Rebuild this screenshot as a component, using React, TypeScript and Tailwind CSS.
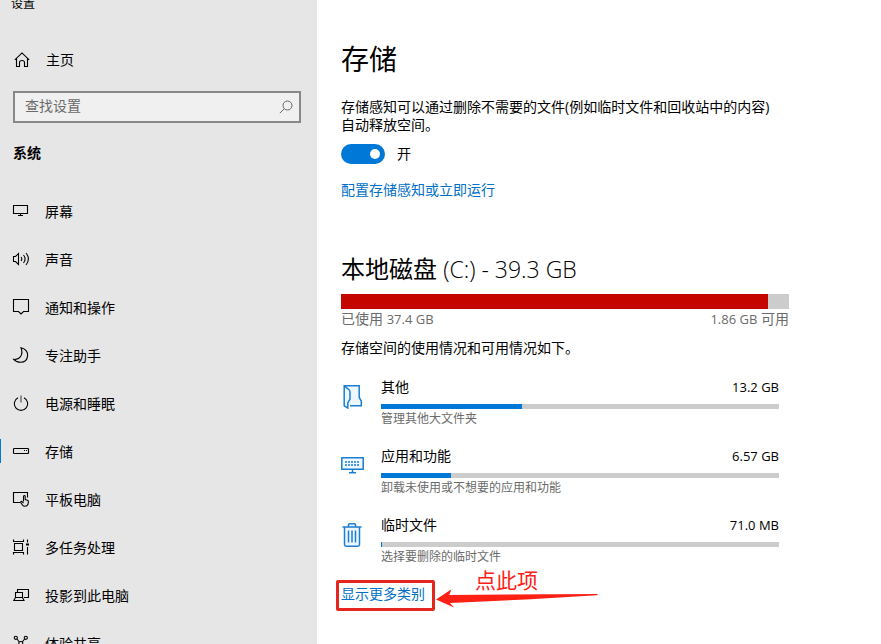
import React from 'react'

const navItems = [
    { label: '屏幕', icon: <DisplayIcon /> },
    { label: '声音', icon: <SoundIcon /> },
    { label: '通知和操作', icon: <NotificationIcon /> },
    { label: '专注助手', icon: <MoonIcon /> },
    { label: '电源和睡眠', icon: <PowerIcon /> },
    { label: '存储', icon: <StorageIcon />, active: true },
    { label: '平板电脑', icon: <TabletIcon /> },
    { label: '多任务处理', icon: <MultitaskIcon /> },
    { label: '投影到此电脑', icon: <ProjectIcon /> },
    { label: '体验共享', icon: <ShareIcon /> },
]

const categories = [
    { name: '其他', size: '13.2 GB', hint: '管理其他大文件夹', percent: 35.4, icon: <FolderIcon /> },
    { name: '应用和功能', size: '6.57 GB', hint: '卸载未使用或不想要的应用和功能', percent: 17.6, icon: <AppsIcon /> },
    { name: '临时文件', size: '71.0 MB', hint: '选择要删除的临时文件', percent: 0.3, icon: <TrashIcon /> },
]

function App() {
    return (
        <div className="flex h-screen overflow-hidden bg-white font-['Open_Sans','Noto_Sans_CJK_SC',sans-serif] text-sm text-black">
            <Sidebar />
            <main className="min-w-0 flex-1 px-6 pt-[35px]">
                <div className="max-w-[448px]">
                    <h1 className="text-[28px] leading-12">存储</h1>
                    <p className="mt-[15px] max-w-[440px] leading-[18px]">
                        存储感知可以通过删除不需要的文件(例如临时文件和回收站中的内容)自动释放空间。
                    </p>
                    <label className="mt-[10px] flex h-5 items-center gap-3">
                        <input
                            type="checkbox"
                            role="switch"
                            defaultChecked
                            className="relative h-5 w-11 appearance-none rounded-full bg-[#0078d7] before:absolute before:top-[5px] before:right-[5px] before:size-[10px] before:rounded-full before:bg-white"
                        />
                        <span>开</span>
                    </label>
                    <a href="#configure" className="mt-4 block leading-5 text-[#0070c8]">配置存储感知或立即运行</a>

                    <h2 className="mt-[53px] text-2xl leading-8">
                        本地磁盘 <span className="text-[23px] font-light">(C:) - 39.3 GB</span>
                    </h2>
                    <div className="mt-[9px] h-[15px] bg-[#cccccc]">
                        <div className="h-full bg-[#c50500]" style={{ width: '95.3%' }} />
                    </div>
                    <div className="flex justify-between leading-5 text-[#6b6b6b]">
                        <span>已使用 <span className="text-[13px]">37.4 GB</span></span>
                        <span><span className="text-[13px]">1.86 GB</span> 可用</span>
                    </div>
                    <p className="mt-[9px] leading-5">存储空间的使用情况和可用情况如下。</p>

                    <ul className="mt-[19px] space-y-[18px] pr-[10px]">
                        {categories.map((item) => (
                            <li key={item.name} className="flex">
                                <div className="w-10 shrink-0 pt-2">{item.icon}</div>
                                <div className="flex-1">
                                    <div className="flex justify-between leading-5">
                                        <span>{item.name}</span>
                                        <span className="text-[13px]">{item.size}</span>
                                    </div>
                                    <div className="mt-[7px] h-[5px] bg-[#cccccc]">
                                        <div className="h-full bg-[#0078d7]" style={{ width: `${item.percent}%` }} />
                                    </div>
                                    <div className="text-xs leading-[19px] text-[#6b6b6b]">{item.hint}</div>
                                </div>
                            </li>
                        ))}
                    </ul>

                    <div className="relative mt-[18px]">
                        <a href="#more" className="leading-5 text-[#0070c8]">显示更多类别</a>
                        <Annotation />
                    </div>
                </div>
            </main>
        </div>
    )
}

function Sidebar() {
    return (
        <aside className="w-[317px] shrink-0 bg-[#e6e6e6]">
            <div className="-mt-1 pl-[11px] text-xs leading-4">设置</div>
            <a href="#home" className="mt-6 flex h-12 items-center gap-4 pl-[14px]">
                <HomeIcon />
                <span>主页</span>
            </a>
            <div className="mt-[7px] mr-4 ml-[13px] flex h-8 items-center border-2 border-[#888888] bg-[#f0f0f0] pr-[6px] pl-[10px]">
                <input
                    type="text"
                    aria-label="查找设置"
                    placeholder="查找设置"
                    className="min-w-0 flex-1 bg-transparent pb-0.5 outline-none placeholder:text-[#6a6a6a]"
                />
                <svg width="14" height="14" viewBox="0 0 14 14" fill="none" stroke="#666666">
                    <circle cx="8.5" cy="5.5" r="4.5" />
                    <path d="M5.3 8.7L.8 13.2" />
                </svg>
            </div>
            <h2 className="mt-5 pl-[13px] leading-5 font-bold">系统</h2>
            <nav className="mt-6">
                {navItems.map((item) => (
                    <a key={item.label} href={`#${item.label}`} className="relative flex h-12 items-center gap-4 pl-[13px]">
                        {item.active && <span className="absolute left-0 h-6 w-px bg-[#0078d7]" />}
                        {item.icon}
                        <span className="pt-0.5">{item.label}</span>
                    </a>
                ))}
            </nav>
        </aside>
    )
}

// Red frame, arrow and note over the link
function Annotation() {
    return (
        <>
            <span className="pointer-events-none absolute -top-1 -left-[5px] h-[31px] w-[99px] rounded-xs border-3 border-[#e5261f]" />
            <svg className="pointer-events-none absolute top-1 left-[95px]" width="163" height="20" viewBox="0 0 163 20">
                <path d="M0 11.5L15.5 1.2L13.2 7L161 6Q163 6.6 161 7.2L90 11.5L14 15L18 19.5Z" fill="#ff2015" />
            </svg>
            <span className="absolute -top-[18px] left-[134px] text-[21px] leading-7 text-[#ff2015]">点此项</span>
        </>
    )
}

function NavSvg({ children }: { children: React.ReactNode }) {
    return (
        <svg className="shrink-0 overflow-visible" width="16" height="16" viewBox="0 0 16 16" fill="none" stroke="#000000" strokeWidth="1.1" aria-hidden="true">
            {children}
        </svg>
    )
}

function HomeIcon() {
    return (
        <NavSvg>
            <path d="M.8 7.8L8 .9L15.2 7.8M2.5 6.5V14.5H5.5V10.5Q5.5 8.5 8 8.5T10.5 10.5V14.5H13.5V6.5" />
        </NavSvg>
    )
}

function DisplayIcon() {
    return (
        <NavSvg>
            <path d="M.5 2.5H14.5V10.5H.5ZM7.5 10.5V12.5M5 12.5H10" />
        </NavSvg>
    )
}

function SoundIcon() {
    return (
        <NavSvg>
            <path d="M.5 5.5H2.5L5.5 2.5V13.5L2.5 10.5H.5Z" />
            <path d="M8 6Q9.6 8 8 10M10.5 4Q13.7 8 10.5 12M13 2Q17.8 8 13 14" />
        </NavSvg>
    )
}

function NotificationIcon() {
    return (
        <NavSvg>
            <path d="M.5 .5H15.5V12.5H10.5L8 15L5.5 12.5H.5Z" />
        </NavSvg>
    )
}

function MoonIcon() {
    return (
        <NavSvg>
            <path d="M8 .8C12.5 2 14.8 5 14.6 8.6C14.3 12.6 11.5 15.3 7.5 15.3C4.5 15.3 2.2 14.2 .7 12.4C6.5 12.8 10.8 8 8 .8Z" />
        </NavSvg>
    )
}

function PowerIcon() {
    return (
        <NavSvg>
            <path d="M5 2.7A6.7 6.7 0 1 0 11 2.7" />
            <path d="M8 .5V7.5" stroke="#444444" />
        </NavSvg>
    )
}

function StorageIcon() {
    return (
        <NavSvg>
            <path d="M1 5.5H15L15.5 6V10L15 10.5H1L.5 10V6Z" />
            <path d="M11 7.5H12M13 7.5H14" />
        </NavSvg>
    )
}

function TabletIcon() {
    return (
        <NavSvg>
            <path d="M7 11.5H.5V1.5H14.5V6.5" />
            <path d="M10.5 10.5V5.5Q10.5 4.5 11.3 4.5T12.2 5.5V8.5L14.5 9.2Q15.5 9.6 15.4 11L14.9 13.5Q14.2 15.3 12 15.3Q10.3 15.3 9.4 14L7.6 11.4Q7.8 10 9 10.6L10.5 12" />
        </NavSvg>
    )
}

function MultitaskIcon() {
    return (
        <NavSvg>
            <path d="M.5 .5V2.5H10.5V.5M1.5 4.5H9.5V11.5H1.5ZM.5 15.5V13.5H10.5V15.5M14.5 .5V3.5M14.5 8V15.5" />
            <path d="M13 5.5H16" strokeWidth="2" />
        </NavSvg>
    )
}

function ProjectIcon() {
    return (
        <NavSvg>
            <path d="M4.5 5V2.5H15.5V10.5H11" />
            <path d="M2.5 10.5V5.5H9.5V10.5M2.5 10.5H9.5L11 13.5H.8Z" />
        </NavSvg>
    )
}

function ShareIcon() {
    return (
        <NavSvg>
            <circle cx="2.8" cy="2.8" r="1.6" />
            <circle cx="12.8" cy="2.8" r="1.6" />
            <circle cx="7.8" cy="8.5" r="2" />
            <path d="M4 4L6.3 7M11.6 4L9.3 7M6.3 10L4 13M9.3 10L11.6 13" />
            <circle cx="2.8" cy="14" r="1.6" />
            <circle cx="12.8" cy="14" r="1.6" />
        </NavSvg>
    )
}

function FolderIcon() {
    return (
        <svg width="24" height="24" viewBox="0 0 24 24" fill="#eef7ff" stroke="#1a7fd0" strokeWidth="1.5" aria-hidden="true">
            <path d="M3.2 .8H18.2V12.5L20.3 16V20.8H9" />
            <path d="M3.2 .8L7.8 4.5Q9 5.5 9 7V14L6.8 18V23L3.2 20.8Z" />
        </svg>
    )
}

function AppsIcon() {
    return (
        <svg width="24" height="24" viewBox="0 0 24 24" fill="#eef7ff" stroke="#1a7fd0" strokeWidth="1.5" aria-hidden="true">
            <path d="M.8 3.8H22.2V15.2H.8ZM11.5 15.5V19M8 18.8H15" />
            <path d="M4 8H19M4 11H19" strokeDasharray="2 1" />
        </svg>
    )
}

function TrashIcon() {
    return (
        <svg width="24" height="24" viewBox="0 0 24 24" fill="#eef7ff" stroke="#1a7fd0" strokeWidth="1.5" aria-hidden="true">
            <path d="M3.5 4V21.5Q3.5 23.2 5 23.2H17Q18.5 23.2 18.5 21.5V4" />
            <path d="M1.5 4H20.5M7.5 4V1.8Q7.5 .8 8.5 .8H13.5Q14.5 .8 14.5 1.8V4M7.5 7.5V19.5M11 7.5V19.5M14.5 7.5V19.5" />
        </svg>
    )
}

export default App
